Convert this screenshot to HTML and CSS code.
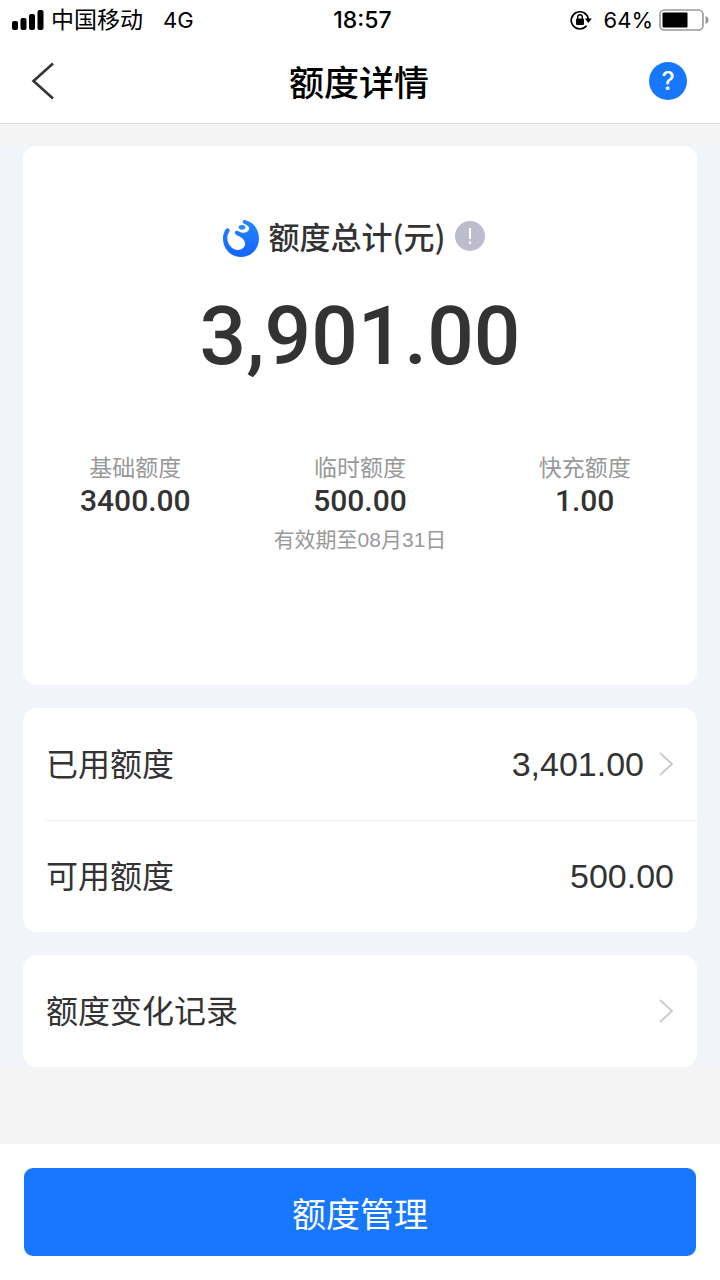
FILE: index.html
```html
<!DOCTYPE html>
<html lang="zh-CN">
  <head>
    <meta charset="UTF-8" />
    <meta name="viewport" content="width=device-width, initial-scale=1.0" />
    <title>额度详情</title>
    <link rel="stylesheet" href="styles.css">
  </head>
  <body>
    <!-- Status bar -->
    <div class="status-bar">
      <div class="status-left">
        <svg class="signal" width="32" height="20" viewBox="0 0 32 20">
          <rect x="0" y="11" width="6" height="9" rx="2" />
          <rect x="8.500" y="8" width="6" height="12" rx="2" />
          <rect x="17" y="4" width="6" height="16" rx="2" />
          <rect x="25.500" y="0" width="6" height="20" rx="2" />
        </svg>
        <span class="carrier">中国移动</span>
        <span>4G</span>
      </div>
      <span class="time">18:57</span>
      <div class="status-right">
        <svg width="22" height="20" viewBox="0 0 22 20">
          <path d="M16.500 15.800A8.600 8.600 0 1 1 18.300 9" fill="none" stroke="#000" stroke-width="1.700" />
          <path d="M14.800 8.500h7l-3.500 4.500z" />
          <rect x="6" y="8.500" width="8" height="6.500" rx="1" />
          <path d="M7.700 9V7a2.300 2.300 0 0 1 4.600 0v2" fill="none" stroke="#000" stroke-width="1.400" />
        </svg>
        <span class="percent">64%</span>
        <svg width="50" height="22" viewBox="0 0 50 22">
          <rect x="1" y="1" width="43" height="20" rx="4.500" fill="#fff" stroke="#999" stroke-width="1.600" />
          <rect x="3.500" y="3.500" width="25" height="15" rx="1" />
          <path d="M46.500 7q3 1 3 4t-3 4z" fill="#999" />
        </svg>
      </div>
    </div>

    <header class="nav">
      <button type="button" class="nav-btn" aria-label="返回">
        <svg width="24" height="38" viewBox="0 0 24 38">
          <path d="M22 1.500L2.500 19L22 36.500" fill="none" stroke="#333" stroke-width="2.600" />
        </svg>
      </button>
      <h1>额度详情</h1>
      <button type="button" class="nav-btn help" aria-label="帮助">?</button>
    </header>

    <main>
      <div class="cards">
        <!-- Total quota -->
        <section class="card summary">
          <div class="summary-title">
            <svg class="logo" width="38" height="40" viewBox="0 0 38 40">
              <defs>
                <linearGradient id="logo" x1="0" y1="0" x2="0" y2="1">
                  <stop offset="0" stop-color="#2489ff" />
                  <stop offset="1" stop-color="#1463ff" />
                </linearGradient>
              </defs>
              <path d="M3.500 11.500C5 9 8.500 10.500 7.500 13C6.800 15 5.300 16.500 5.300 20C5.300 26.500 10.500 32 16 32C20.500 32 23.500 28.500 23 25C22.500 21 19 19.500 16.500 18C13.500 16.500 12.500 15.500 13 14C13.500 12.500 15.500 12.500 17 13.500C19.500 15 23.500 15.500 26 13C28.500 10.500 27 7.500 22.500 6C19.500 5 20.500 1.500 23 2C31.500 4 37 11.500 37 20.500C37 31 29 39 19 39S1 31 1 20.500C1 17 1.800 14 3.500 11.500Z" fill="url(#logo)" />
              <ellipse cx="20" cy="9.300" rx="3.300" ry="2.400" fill="#2489ff" />
            </svg>
            <h2>额度总计(元)</h2>
            <button type="button" class="info" aria-label="说明">
              <svg width="30" height="30" viewBox="0 0 30 30">
                <circle cx="15" cy="15" r="15" fill="#bcbccf" />
                <path d="M15 7v11M15 20.500v2.500" stroke="#fff" stroke-width="2" />
              </svg>
            </button>
          </div>
          <div class="total">3,901.00</div>
          <div class="parts">
            <div class="part">
              <div class="part-name">基础额度</div>
              <div class="part-value">3400.00</div>
            </div>
            <div class="part">
              <div class="part-name">临时额度</div>
              <div class="part-value">500.00</div>
              <div class="part-note">有效期至08月31日</div>
            </div>
            <div class="part">
              <div class="part-name">快充额度</div>
              <div class="part-value">1.00</div>
            </div>
          </div>
        </section>

        <!-- Used / available -->
        <section class="card">
          <a class="row" href="#used">
            <span class="row-name">已用额度</span>
            <span class="row-value">3,401.00</span>
            <svg class="arrow" width="16" height="26" viewBox="0 0 16 26">
              <path d="M2 2l12 11L2 24" />
            </svg>
          </a>
          <div class="row">
            <span class="row-name">可用额度</span>
            <span class="row-value">500.00</span>
          </div>
        </section>

        <section class="card">
          <a class="row" href="#history">
            <span class="row-name">额度变化记录</span>
            <svg class="arrow" width="16" height="26" viewBox="0 0 16 26">
              <path d="M2 2l12 11L2 24" />
            </svg>
          </a>
        </section>
      </div>
    </main>

    <footer>
      <button type="button" class="manage-btn">额度管理</button>
    </footer>
  </body>
</html>
```

FILE: styles.css
```css
* {
  box-sizing: border-box;
}
body {
  display: flex;
  flex-direction: column;
  min-height: 100vh;
  margin: 0;
  background-color: #f4f4f4;
  color: #333333;
  font-family: "Liberation Sans", "Noto Sans CJK SC", sans-serif;
}
h1,
h2 {
  margin: 0;
  font-weight: 500;
}
button {
  padding: 0;
  border: none;
  background: none;
  font-family: inherit;
  cursor: pointer;
}
svg {
  display: block;
}

/* Status bar */
.status-bar {
  display: grid;
  grid-template-columns: 1fr auto 1fr;
  align-items: center;
  height: 40px;
  padding: 0 11px 0 12px;
  background-color: #ffffff;
  color: #000000;
  font-family: Inter, "Noto Sans CJK SC", sans-serif;
  font-size: 22px;
  line-height: 40px;
}
.status-left,
.status-right {
  display: flex;
  align-items: center;
}
.status-right {
  justify-content: flex-end;
}
.carrier {
  margin: 0 20px 0 7px;
  font-size: 23px;
}
.time {
  padding-left: 4px;
  font-size: 23px;
  font-weight: 500;
}
.percent {
  margin: 0 6px 0 12px;
}

/* Navigation */
.nav {
  display: flex;
  align-items: center;
  justify-content: space-between;
  height: 84px;
  padding: 0 33px 2px 31px;
  background-color: #ffffff;
  border-bottom: 1px solid #dddddd;
}
.nav-btn {
  width: 38px;
}
.nav h1 {
  color: #000000;
  font-size: 35px;
}
.help {
  height: 38px;
  border-radius: 50%;
  background-color: #1777ff;
  color: #ffffff;
  font-family: Inter, sans-serif;
  font-size: 25px;
  font-weight: 500;
}

main {
  flex: 1;
  padding-top: 22px;
}
.cards {
  display: flex;
  flex-direction: column;
  gap: 23px;
  padding: 0 23px;
  background-color: #f1f4fa;
}
.card {
  border-radius: 14px;
  background-color: #ffffff;
}

/* Total quota */
.summary {
  min-height: 539px;
  padding-top: 68px;
}
.summary-title {
  display: flex;
  align-items: center;
  justify-content: center;
  height: 44px;
  padding-right: 13px;
}
.logo {
  align-self: flex-end;
}
.summary-title h2 {
  margin: 0 9px 0 8px;
  font-family: "Noto Sans CJK SC", sans-serif;
  font-size: 31px;
  line-height: 44px;
}
.total {
  margin-top: 28px;
  font-family: Roboto, sans-serif;
  font-size: 82px;
  font-weight: 500;
  line-height: 100px;
  text-align: center;
}
.parts {
  display: grid;
  grid-template-columns: repeat(3, 1fr);
  margin-top: 66px;
  text-align: center;
}
.part-name,
.part-note {
  color: #999999;
  font-size: 23px;
  line-height: 32px;
}
.part-value {
  font-family: Roboto, sans-serif;
  font-size: 30px;
  font-weight: 500;
  line-height: 34px;
}
.part-note {
  margin-top: 6px;
  font-size: 21px;
}

/* List rows */
.row {
  display: flex;
  align-items: center;
  min-height: 112px;
  margin-left: 23px;
  padding-right: 23px;
  color: #333333;
  text-decoration: none;
}
.row + .row {
  border-top: 1px solid #eeeeee;
}
.row-name {
  padding-bottom: 5px;
  font-size: 32px;
}
.row-value {
  margin-left: auto;
  font-size: 34px;
}
.arrow {
  margin-left: 14px;
  fill: none;
  stroke: #cccccc;
  stroke-width: 2;
}
.row-name + .arrow {
  margin-left: auto;
}

footer {
  padding: 24px;
  background-color: #ffffff;
}
.manage-btn {
  display: block;
  width: 100%;
  height: 88px;
  border-radius: 9px;
  background-color: #1777ff;
  color: #ffffff;
  font-size: 34px;
}
```
